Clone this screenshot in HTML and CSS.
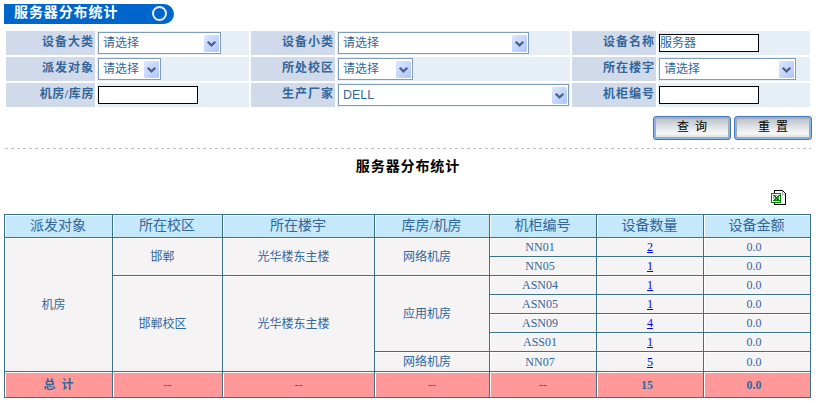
FILE: index.html
```html
<!DOCTYPE html>
<html lang="zh-CN">
<head>
<meta charset="utf-8">
<title>服务器分布统计</title>
<link rel="stylesheet" href="styles.css">
</head>
<body>
<svg class="defs" width="0" height="0">
  <defs>
    <linearGradient id="arrowFill" x1="0" y1="0" x2="1" y2="1">
      <stop offset="0" stop-color="#dce6ff"/>
      <stop offset="1" stop-color="#afc6fb"/>
    </linearGradient>
    <symbol id="arrow" viewBox="0 0 15 17">
      <rect width="15" height="17" rx="1.5" fill="url(#arrowFill)"/>
      <path d="M3.7 6.7 7.5 10.4 11.3 6.7" fill="none" stroke="#4d6185" stroke-width="2.2"/>
    </symbol>
  </defs>
</svg>
<div class="banner"><h1>服务器分布统计</h1><span class="ring"></span></div>

<form class="filters">
  <label>设备大类</label>
  <div class="field"><span class="select w-123"><span>请选择</span><svg><use href="#arrow"/></svg></span></div>
  <label>设备小类</label>
  <div class="field"><span class="select w-191"><span>请选择</span><svg><use href="#arrow"/></svg></span></div>
  <label>设备名称</label>
  <div class="field"><input type="text" value="服务器"></div>

  <label>派发对象</label>
  <div class="field"><span class="select w-63"><span>请选择</span><svg><use href="#arrow"/></svg></span></div>
  <label>所处校区</label>
  <div class="field"><span class="select w-75"><span>请选择</span><svg><use href="#arrow"/></svg></span></div>
  <label>所在楼宇</label>
  <div class="field"><span class="select w-137"><span>请选择</span><svg><use href="#arrow"/></svg></span></div>

  <label class="tight">机房/库房</label>
  <div class="field"><input type="text"></div>
  <label>生产厂家</label>
  <div class="field"><span class="select w-231"><span class="latin">DELL</span><svg><use href="#arrow"/></svg></span></div>
  <label>机柜编号</label>
  <div class="field"><input type="text"></div>
</form>

<div class="actions">
  <button type="button">查&nbsp;&nbsp;询</button>
  <button type="button">重&nbsp;&nbsp;置</button>
</div>
<div class="divider"></div>

<h2>服务器分布统计</h2>
<div class="export">
  <svg width="16" height="16" viewBox="0 0 16 16" shape-rendering="crispEdges">
    <path d="M3.5 .5H11.5L14.5 3.5V14.5H3.5Z" fill="#fff" stroke="#000"/>
    <path d="M11 1V4H14" fill="none" stroke="#aaa"/>
    <rect x=".5" y="3.5" width="9" height="9" fill="#fff" stroke="#008000"/>
    <path d="M2 5H4V6H5V7H6V6H7V5H9V6H8V7H7V9H8V10H9V11H2V10H3V9H4V7H3V6H2Z" fill="#008000"/>
    <path d="M5 9h1v1h-1zM4 5h2v1h-2zM7 7h1v2h-1zM2 7h1v2h-1z" fill="#5cae5c"/>
  </svg>
</div>

<table class="report">
  <colgroup><col class="c1"><col class="c2"><col class="c3"><col class="c4"><col class="c5"><col class="c6"><col class="c7"></colgroup>
  <thead>
    <tr><th>派发对象</th><th>所在校区</th><th>所在楼宇</th><th>库房/机房</th><th>机柜编号</th><th>设备数量</th><th>设备金额</th></tr>
  </thead>
  <tbody>
    <tr><td class="name" rowspan="7">机房</td><td class="name" rowspan="2">邯郸</td><td class="name" rowspan="2">光华楼东主楼</td><td class="name" rowspan="2">网络机房</td><td class="code">NN01</td><td><a href="#">2</a></td><td class="sum">0.0</td></tr>
    <tr><td class="code">NN05</td><td><a href="#">1</a></td><td class="sum">0.0</td></tr>
    <tr><td class="name" rowspan="5">邯郸校区</td><td class="name" rowspan="5">光华楼东主楼</td><td class="name" rowspan="4">应用机房</td><td class="code">ASN04</td><td><a href="#">1</a></td><td class="sum">0.0</td></tr>
    <tr><td class="code">ASN05</td><td><a href="#">1</a></td><td class="sum">0.0</td></tr>
    <tr><td class="code">ASN09</td><td><a href="#">4</a></td><td class="sum">0.0</td></tr>
    <tr><td class="code">ASS01</td><td><a href="#">1</a></td><td class="sum">0.0</td></tr>
    <tr class="last"><td class="name">网络机房</td><td class="code">NN07</td><td><a href="#">5</a></td><td class="sum">0.0</td></tr>
  </tbody>
  <tfoot>
    <tr><td class="total">总&nbsp; 计</td><td>--</td><td>--</td><td>--</td><td>--</td><td class="code bold">15</td><td class="sum bold">0.0</td></tr>
  </tfoot>
</table>
</body>
</html>
```
FILE: styles.css
```css
* { box-sizing: border-box; }

body {
  margin: 0;
  padding: 4px 4px 0;
  background: #fff;
  color: #336699;
  font: 12px/14px "Liberation Serif", "Noto Sans CJK SC", serif;
  overflow: hidden;
}

.defs { display: block; }

.banner {
  display: flex;
  align-items: center;
  justify-content: space-between;
  width: 170px;
  height: 20px;
  padding: 0 7px 2px 10px;
  border-radius: 0 10px 10px 0;
  background: #0066cc;
  color: #fff;
}

h1, h2 {
  margin: 0;
  font-size: 14px;
  line-height: 18px;
  letter-spacing: 0.9px;
}

.ring {
  width: 15px;
  height: 15px;
  border: 2.5px solid #e4eefa;
  border-radius: 50%;
}

.filters {
  display: grid;
  grid-template-columns: 89px 152px 84px 233px 84px 152px;
  grid-auto-rows: 24px;
  gap: 2px;
  margin: 7px 0 0 2px;
}

.filters label {
  padding: 4px 1px 0 0;
  background: #d0daea;
  font-weight: bold;
  line-height: 15px;
  letter-spacing: 1px;
  text-align: right;
}
.filters label.tight { letter-spacing: 0.6px; }

.field {
  display: flex;
  align-items: center;
  padding-left: 1px;
  background: #e6eff6;
}

.select {
  display: flex;
  align-items: center;
  justify-content: space-between;
  height: 22px;
  padding: 0 1px 0 4px;
  border: 1px solid #7f9db9;
  background: #fff;
  line-height: 16px;
}
.select svg { width: 15px; height: 17px; }
.latin { font-family: "Liberation Sans", sans-serif; font-size: 12.5px; }
.w-63 { width: 63px; }
.w-75 { width: 75px; }
.w-123 { width: 123px; }
.w-137 { width: 137px; }
.w-191 { width: 191px; }
.w-231 { width: 231px; }

input {
  width: 100px;
  height: 18px;
  padding: 0 0 3px;
  border: 1px solid #000;
  border-radius: 0;
  outline: 0;
  background: #fff;
  color: #336699;
  font: inherit;
}

.actions {
  display: flex;
  justify-content: flex-end;
  gap: 3px;
  margin-top: 9px;
}

button {
  width: 78px;
  height: 24px;
  padding: 0 0 2px;
  border: 1px solid #3f78c0;
  border-radius: 3px;
  background: linear-gradient(#b6bcc6, #e8eaec 55%, #f6f6f6 75%, #d2d6da);
  box-shadow: inset 0 0 0 1px #8db4e4, inset 0 0 0 2px #a3abb3;
  color: #000;
  font: 12px/14px "Liberation Serif", "Noto Sans CJK SC", serif;
}

.divider {
  height: 1px;
  margin: 8px 1px 0;
  background: repeating-linear-gradient(90deg, #c0c0c0 0 3px, transparent 3px 6px);
}

h2 {
  margin-top: 9px;
  color: #000;
  text-align: center;
}

.export {
  display: flex;
  justify-content: flex-end;
  padding: 14px 25px 8px 0;
}

.report {
  width: 807px;
  table-layout: fixed;
  border-collapse: separate;
  border-spacing: 0;
  border: solid #39738a;
  border-width: 1px 0 0 1px;
  text-align: center;
}
.c1 { width: 108px; }
.c2 { width: 110px; }
.c3 { width: 152px; }
.c4 { width: 115px; }
.c5, .c6, .c7 { width: 107px; }

.report th, .report td {
  padding: 0;
  border: solid #39738a;
  border-width: 0 1px 1px 0;
  box-shadow: inset 1px 1px #fff;
}
.report th {
  height: 23px;
  padding-right: 1px;
  background: #c5e8fa;
  font-size: 14px;
  font-weight: normal;
}
.report td { background: #f5f3f4; }
.report tbody tr { height: 19px; }
.report tbody tr.last { height: 20px; }
.report tfoot tr { height: 26px; }
.report tfoot td { background: #ff9999; }
.report td.name { padding-right: 10px; }
.report td.code, .report td.sum { padding-right: 6px; }
.report td.total, .report td.bold { font-weight: bold; }
a { color: #0000ee; }
```
